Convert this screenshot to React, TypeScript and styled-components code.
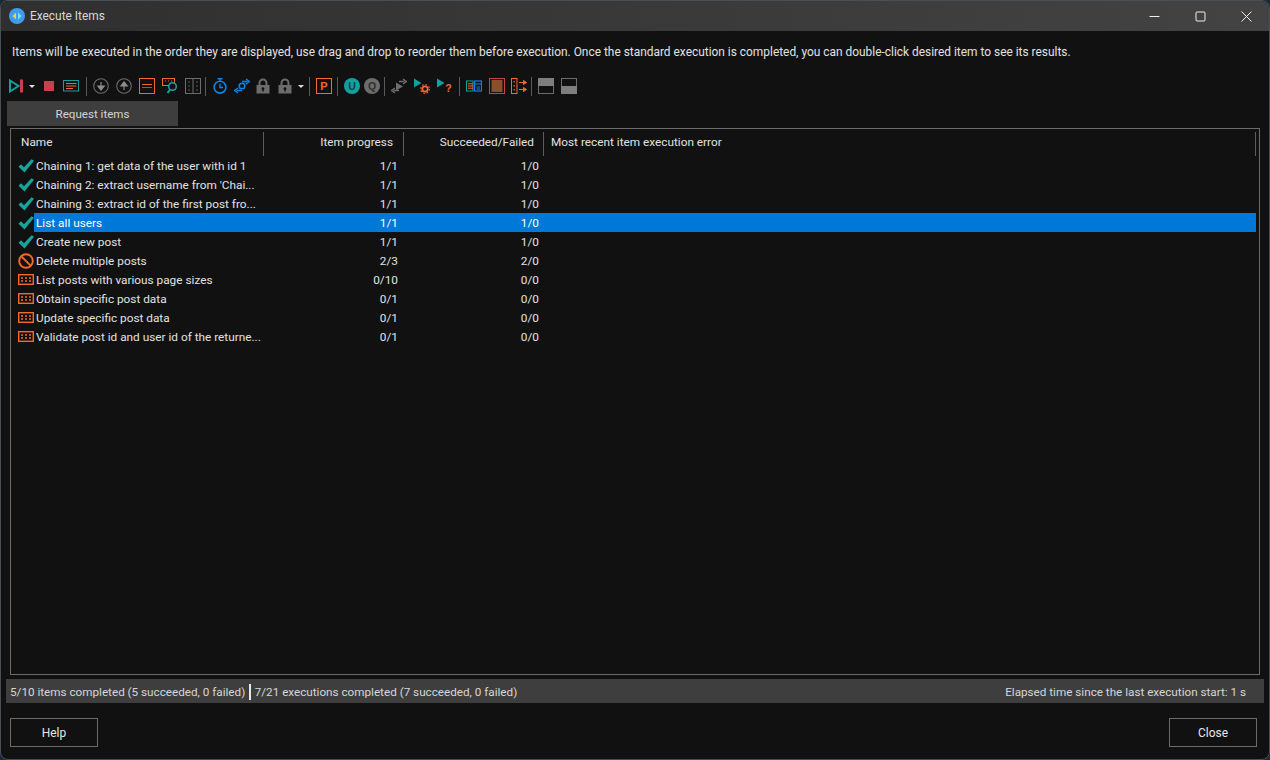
import React from "react"
import styled, { createGlobalStyle } from "styled-components"

const ORANGE = "#f8682a"
const TEAL = "#12a0a0"
const BLUE = "#0a84e8"
const RED = "#c8404c"
const GREY = "#6c6c6c"

const GlobalStyle = createGlobalStyle`
	html, body {
		margin: 0;
		height: 100%;
		background: #1c2a38;
	}
	body {
		font-family: Roboto, "Open Sans", "Liberation Sans", sans-serif;
		font-size: 11.92px;
		color: #e2e2e2;
		overflow: hidden;
	}
`

const Icon = styled.svg`
	display: block;
	flex: none;
	width: 16px;
	height: 16px;
`

const PlayIcon = () => (
	<Icon viewBox="0 0 16 16">
		<path d="M1 2.5 L9.5 8 L1 13.5Z" fill="none" stroke={TEAL} strokeWidth="2" />
		<rect x="11" y="1.5" width="3" height="13" fill={RED} />
	</Icon>
)
const StopIcon = () => (
	<Icon viewBox="0 0 16 16">
		<rect x="3" y="3" width="10" height="10" fill={RED} />
	</Icon>
)
const ListIcon = () => (
	<Icon viewBox="0 0 16 16">
		<rect x="0.5" y="2.5" width="15" height="10.5" fill="none" stroke={TEAL} />
		<path d="M3 5.5h10.5M3 8h10.5M3 10.5h7" stroke={ORANGE} strokeWidth="1.1" />
	</Icon>
)
const ArrowCircle = ({ up }: { up?: boolean }) => (
	<Icon viewBox="0 0 16 16">
		<circle cx="8" cy="8" r="7.3" fill="none" stroke={GREY} strokeWidth="1.1" />
		<path d={up ? "M8 12V7M4.8 8 L8 4 L11.2 8Z" : "M8 4v5M4.8 8 L8 12 L11.2 8Z"} fill="#8c8c8c" stroke="#8c8c8c" strokeWidth="1.2" />
	</Icon>
)
const BoxLinesIcon = () => (
	<Icon viewBox="0 0 16 16">
		<rect x="0.5" y="0.5" width="15" height="15" fill="none" stroke={ORANGE} />
		<path d="M3 6.5h10" stroke={ORANGE} />
		<path d="M3 9.5h10" stroke={RED} />
	</Icon>
)
const FindIcon = () => (
	<Icon viewBox="0 0 16 16">
		<rect x="0.5" y="0.5" width="12" height="7" fill="none" stroke={ORANGE} />
		<path d="M3 3h1M6 3h1M9 3h1" stroke={ORANGE} />
		<circle cx="10.5" cy="8.5" r="3.8" fill="#111" stroke={TEAL} strokeWidth="1.6" />
		<path d="M8 11.5 L5.5 15" stroke={TEAL} strokeWidth="2" />
	</Icon>
)
const ColumnsIcon = () => (
	<Icon viewBox="0 0 16 16">
		<rect x="0.5" y="0.5" width="15" height="15" fill="none" stroke={GREY} />
		<path d="M8 1v14" stroke={GREY} />
		<path d="M4 3.5v1M4 7.5v1M4 11.5v1M12 3.5v1M12 7.5v1M12 11.5v1" stroke={GREY} strokeWidth="1.6" />
	</Icon>
)
const TimerIcon = () => (
	<Icon viewBox="0 0 16 16">
		<circle cx="8" cy="9.2" r="5.9" fill="none" stroke={BLUE} strokeWidth="1.6" />
		<path d="M5.5 0.8h5M8 1v2.5" stroke={BLUE} strokeWidth="1.4" />
		<path d="M8 5.8v3.7h3" fill="none" stroke={BLUE} strokeWidth="1.3" />
	</Icon>
)
const SwapIcon = ({ color = BLUE, run }: { color?: string; run?: boolean }) => (
	<Icon viewBox="0 0 16 16">
		{run ? (
			<path d="M5 4.5 L12 8.5 L5 12.5Z" fill={color} />
		) : (
			<circle cx="8" cy="8" r="2.8" fill="none" stroke={color} strokeWidth="1.6" />
		)}
		<path d="M8 3.5h5.5M12 1 L15.5 3.5 L12 6" fill="none" stroke={color} strokeWidth="1.3" />
		<path d="M8 12.5h-5.5M4 10 L0.5 12.5 L4 15" fill="none" stroke={color} strokeWidth="1.3" />
	</Icon>
)
const LockIcon = () => (
	<Icon viewBox="0 0 16 16">
		<path d="M4.5 7V5a3.5 3.5 0 0 1 7 0v2" fill="none" stroke={GREY} strokeWidth="2" />
		<path fillRule="evenodd" d="M1.5 7h13v8.5h-13Z M8 9.2a1.5 1.5 0 0 0-.7 2.8v1.5h1.4V12A1.5 1.5 0 0 0 8 9.2Z" fill={GREY} />
	</Icon>
)
const LetterBox = () => (
	<Icon viewBox="0 0 16 16">
		<rect x="0.5" y="0.5" width="15" height="15" fill="none" stroke={ORANGE} />
		<text x="8" y="12.2" textAnchor="middle" fontSize="11" fontWeight="700" fontFamily="Liberation Sans" fill={ORANGE}>P</text>
	</Icon>
)
const LetterCircle = ({ color, ink, children }: { color: string; ink: string; children: string }) => (
	<Icon viewBox="0 0 16 16">
		<circle cx="8" cy="8" r="8" fill={color} />
		<text x="8" y="11.8" textAnchor="middle" fontSize="10.5" fontWeight="700" fontFamily="Liberation Sans" fill={ink}>{children}</text>
	</Icon>
)
const RunGearIcon = () => (
	<Icon viewBox="0 0 16 16">
		<path d="M0 0.5 L7.5 5 L0 9.5Z" fill={TEAL} />
		<circle cx="11" cy="11" r="2.7" fill="none" stroke={ORANGE} strokeWidth="1.8" />
		<circle cx="11" cy="11" r="4.4" fill="none" stroke={ORANGE} strokeWidth="1.2" strokeDasharray="1.6 1.85" />
	</Icon>
)
const RunHelpIcon = () => (
	<Icon viewBox="0 0 16 16">
		<path d="M0 0.5 L7.5 5 L0 9.5Z" fill={TEAL} />
		<text x="11.5" y="14" textAnchor="middle" fontSize="10.5" fontFamily="Liberation Sans" fontWeight="700" fill={ORANGE}>?</text>
	</Icon>
)
const SplitListIcon = () => (
	<Icon viewBox="0 0 16 16">
		<rect x="0.5" y="3" width="6.5" height="10" fill="none" stroke={TEAL} />
		<path d="M2 5.8h5M2 8h5M2 10.2h5" stroke={ORANGE} />
		<rect x="8.5" y="3" width="7" height="10" fill="none" stroke={BLUE} strokeWidth="1.2" />
		<path d="M8.5 6h7M10.5 9h3.5M10.5 11h3.5" stroke={BLUE} />
	</Icon>
)
const BrownBoxIcon = () => (
	<Icon viewBox="0 0 16 16">
		<rect x="0.5" y="0.5" width="15" height="15" fill="#111" stroke={RED} />
		<rect x="2.5" y="2" width="11" height="12" fill="#8a4f2c" />
	</Icon>
)
const FlowIcon = () => (
	<Icon viewBox="0 0 16 16">
		<rect x="0.5" y="0.5" width="5.5" height="15" fill="none" stroke={ORANGE} />
		<path d="M3.2 3v1.5M3.2 7v1.5M3.2 11v1.5" stroke={ORANGE} strokeWidth="1.2" />
		<path d="M8 4.5h7M12.5 2.5 L15.5 4.5 L12.5 6.5Z M8 11.5h7M12.5 9.5 L15.5 11.5 L12.5 13.5Z" fill={ORANGE} stroke={ORANGE} />
	</Icon>
)
const PaneIcon = ({ bottom }: { bottom?: boolean }) => (
	<Icon viewBox="0 0 16 16">
		<rect x="0.5" y="0.5" width="15" height="15" fill="none" stroke={GREY} />
		<rect x="0" y={bottom ? 8 : 0} width="16" height="8" fill="#7e7e7e" />
	</Icon>
)

const CheckIcon = () => (
	<Icon viewBox="0 0 16 16">
		<path d="M0.5 8.8 L3 6.3 L6 9.2 L13.5 1.2 L16 2.8 L6.5 14.5Z" fill="#16a39b" />
	</Icon>
)
const BlockedIcon = () => (
	<Icon viewBox="0 0 16 16">
		<circle cx="8" cy="8" r="6.8" fill="none" stroke={ORANGE} strokeWidth="1.9" />
		<path d="M3.4 3.4 L12.6 12.6" stroke={ORANGE} strokeWidth="1.9" />
	</Icon>
)
const PendingIcon = () => (
	<Icon viewBox="0 0 16 16">
		<rect x="0.7" y="2.7" width="14.6" height="9.6" fill="none" stroke={ORANGE} strokeWidth="1.4" />
		<path d="M3 6h2M7 6h2M11 6h2M3 9h2M7 9h2M11 9h2" stroke={ORANGE} strokeWidth="1.3" />
	</Icon>
)

const Window = styled.div`
	box-sizing: border-box;
	height: 760px;
	display: flex;
	flex-direction: column;
	background: #111111;
	border: 1px solid #46505a;
	border-radius: 8px;
	overflow: hidden;
`
const TitleBar = styled.div`
	height: 30px;
	flex: none;
	display: flex;
	align-items: center;
	padding-left: 8px;
	background: linear-gradient(90deg, #2f2f2f, #434343);
`
const AppIcon = styled.svg`
	width: 16px;
	height: 16px;
	flex: none;
`
const Title = styled.div`
	margin-left: 5px;
	flex: 1;
	color: #d8d8d8;
`
const WinButton = styled.div`
	width: 46px;
	height: 30px;
	display: flex;
	align-items: center;
	justify-content: center;
	svg {
		width: 11px;
		height: 11px;
	}
`
const Intro = styled.div`
	margin: 13px 0 0 11px;
	height: 17px;
	line-height: 17px;
	white-space: nowrap;
`
const Toolbar = styled.div`
	margin-top: 16px;
	padding-left: 8px;
	height: 18px;
	display: flex;
	align-items: center;
`
const ToolGroup = styled.div<{ $gap: number }>`
	display: flex;
	align-items: center;
	gap: ${(p) => p.$gap}px;
`
const Caret = styled.div<{ $ml?: number }>`
	width: 0;
	height: 0;
	margin-left: ${(p) => p.$ml ?? 0}px;
	border-left: 3px solid transparent;
	border-right: 3px solid transparent;
	border-top: 3px solid #dddddd;
`
const Sep = styled.div<{ $l: number }>`
	width: 1px;
	height: 19px;
	flex: none;
	background: #5a5a5a;
	margin: 0 6px 0 ${(p) => p.$l}px;
`
const TabStrip = styled.div`
	margin-top: 6px;
	padding-left: 6px;
	display: flex;
`
const Tab = styled.div`
	width: 171px;
	height: 25px;
	display: flex;
	align-items: center;
	justify-content: center;
	background: #3e3e3e;
	color: #d4d4d4;
	font-size: 11.6px;
`
const ListBox = styled.div`
	flex: 1;
	margin: 2px 9px 0;
	border: 1px solid #6b6b6b;
	display: flex;
	flex-direction: column;
	min-height: 0;
`
const HeaderRow = styled.div`
	height: 27px;
	flex: none;
	display: grid;
	grid-template-columns: 253px 140px 140px 712px;
	align-items: center;
	font-size: 11.8px;
`
const HeaderCell = styled.div<{ $right?: boolean; $pad: number }>`
	height: 24px;
	margin-top: 3px;
	line-height: 21px;
	border-right: 1px solid #5e5e5e;
	text-align: ${(p) => (p.$right ? "right" : "left")};
	padding: ${(p) => (p.$right ? `0 ${p.$pad}px 0 0` : `0 0 0 ${p.$pad}px`)};
	white-space: nowrap;
`
const Rows = styled.div`
	display: flex;
	flex-direction: column;
`
const Row = styled.div`
	height: 19px;
	padding: 0 3px 0 7px;
	display: flex;
	align-items: center;
	> svg {
		margin-top: 1px;
	}
`
const RowBody = styled.div<{ $selected?: boolean }>`
	flex: 1;
	height: 19px;
	line-height: 20px;
	display: grid;
	grid-template-columns: 229px 140px 141px 1fr;
	font-size: 11.8px;
	background: ${(p) => (p.$selected ? "#0078d7" : "transparent")};
	color: ${(p) => (p.$selected ? "#ffffff" : "#e2e2e2")};
`
const NameCell = styled.div`
	padding-left: 2px;
	white-space: nowrap;
`
const NumCell = styled.div`
	text-align: right;
	padding-right: 5px;
`
const StatusBar = styled.div`
	margin: 4px 5px 0;
	height: 24px;
	flex: none;
	display: flex;
	align-items: center;
	padding: 1px 18px 0 4px;
	box-sizing: border-box;
	background: #3e3e3e;
	color: #d6d6d6;
	font-size: 11.7px;
`
const StatusDivider = styled.div`
	width: 1.5px;
	height: 16px;
	background: #e8e8e8;
	margin: 0 4px;
`
const Elapsed = styled.div`
	margin-left: auto;
`
const Footer = styled.div`
	height: 56px;
	flex: none;
	display: flex;
	justify-content: space-between;
	padding: 15px 12px 0 9px;
	box-sizing: border-box;
`
const Button = styled.div`
	box-sizing: border-box;
	width: 88px;
	height: 29px;
	display: flex;
	align-items: center;
	justify-content: center;
	border: 1px solid #6b6b6b;
	color: #e8e8e8;
`

type Item = { state: "done" | "blocked" | "pending"; name: string; progress: string; result: string; selected?: boolean }

const items: Item[] = [
	{ state: "done", name: "Chaining 1: get data of the user with id 1", progress: "1/1", result: "1/0" },
	{ state: "done", name: "Chaining 2: extract username from 'Chai...", progress: "1/1", result: "1/0" },
	{ state: "done", name: "Chaining 3: extract id of the first post fro...", progress: "1/1", result: "1/0" },
	{ state: "done", name: "List all users", progress: "1/1", result: "1/0", selected: true },
	{ state: "done", name: "Create new post", progress: "1/1", result: "1/0" },
	{ state: "blocked", name: "Delete multiple posts", progress: "2/3", result: "2/0" },
	{ state: "pending", name: "List posts with various page sizes", progress: "0/10", result: "0/0" },
	{ state: "pending", name: "Obtain specific post data", progress: "0/1", result: "0/0" },
	{ state: "pending", name: "Update specific post data", progress: "0/1", result: "0/0" },
	{ state: "pending", name: "Validate post id and user id of the returne...", progress: "0/1", result: "0/0" },
]

const stateIcons = {
	done: <CheckIcon />,
	blocked: <BlockedIcon />,
	pending: <PendingIcon />,
}

export default function App() {
	return (
		<Window>
			<GlobalStyle />
			<TitleBar>
				<AppIcon viewBox="0 0 16 16">
					<circle cx="8" cy="8" r="8" fill="#3f9bf0" />
					<path d="M7 4.5 L3.5 8 L7 11.5Z" fill="#e9d44c" />
					<path d="M9 4.5 L12.5 8 L9 11.5Z" fill="#7fe0d0" />
				</AppIcon>
				<Title>Execute Items</Title>
				<WinButton>
					<svg viewBox="0 0 11 11"><path d="M0.5 5.5h10" stroke="#eee" /></svg>
				</WinButton>
				<WinButton>
					<svg viewBox="0 0 11 11"><rect x="1" y="1" width="9" height="9" rx="1" fill="none" stroke="#eee" /></svg>
				</WinButton>
				<WinButton>
					<svg viewBox="0 0 11 11"><path d="M0.5 0.5 L10.5 10.5M10.5 0.5 L0.5 10.5" stroke="#eee" /></svg>
				</WinButton>
			</TitleBar>
			<Intro>
				Items will be executed in the order they are displayed, use drag and drop to reorder them before execution. Once the standard execution is completed, you can double-click desired item to see its results.
			</Intro>
			<Toolbar>
				<ToolGroup $gap={6}>
					<PlayIcon />
					<Caret $ml={-2} />
					<StopIcon />
					<ListIcon />
				</ToolGroup>
				<Sep $l={7} />
				<ToolGroup $gap={7}>
					<ArrowCircle />
					<ArrowCircle up />
					<BoxLinesIcon />
					<FindIcon />
					<ColumnsIcon />
				</ToolGroup>
				<Sep $l={4} />
				<ToolGroup $gap={5.5}>
					<TimerIcon />
					<SwapIcon />
					<LockIcon />
					<LockIcon />
					<Caret />
				</ToolGroup>
				<Sep $l={5} />
				<LetterBox />
				<Sep $l={5} />
				<ToolGroup $gap={4}>
					<LetterCircle color={TEAL} ink="#0c3f44">U</LetterCircle>
					<LetterCircle color={GREY} ink="#2e2e2e">Q</LetterCircle>
				</ToolGroup>
				<Sep $l={4} />
				<ToolGroup $gap={7}>
					<SwapIcon color={GREY} run />
					<RunGearIcon />
					<RunHelpIcon />
				</ToolGroup>
				<Sep $l={6} />
				<ToolGroup $gap={6.5}>
					<SplitListIcon />
					<BrownBoxIcon />
					<FlowIcon />
				</ToolGroup>
				<Sep $l={4} />
				<ToolGroup $gap={7}>
					<PaneIcon />
					<PaneIcon bottom />
				</ToolGroup>
			</Toolbar>
			<TabStrip>
				<Tab>Request items</Tab>
			</TabStrip>
			<ListBox>
				<HeaderRow>
					<HeaderCell $pad={10}>Name</HeaderCell>
					<HeaderCell $right $pad={10}>Item progress</HeaderCell>
					<HeaderCell $right $pad={9}>Succeeded/Failed</HeaderCell>
					<HeaderCell $pad={7}>Most recent item execution error</HeaderCell>
				</HeaderRow>
				<Rows>
					{items.map((item) => (
						<Row key={item.name}>
							{stateIcons[item.state]}
							<RowBody $selected={item.selected}>
								<NameCell>{item.name}</NameCell>
								<NumCell>{item.progress}</NumCell>
								<NumCell>{item.result}</NumCell>
							</RowBody>
						</Row>
					))}
				</Rows>
			</ListBox>
			<StatusBar>
				5/10 items completed (5 succeeded, 0 failed)
				<StatusDivider />
				7/21 executions completed (7 succeeded, 0 failed)
				<Elapsed>Elapsed time since the last execution start: 1 s</Elapsed>
			</StatusBar>
			<Footer>
				<Button>Help</Button>
				<Button>Close</Button>
			</Footer>
		</Window>
	)
}
